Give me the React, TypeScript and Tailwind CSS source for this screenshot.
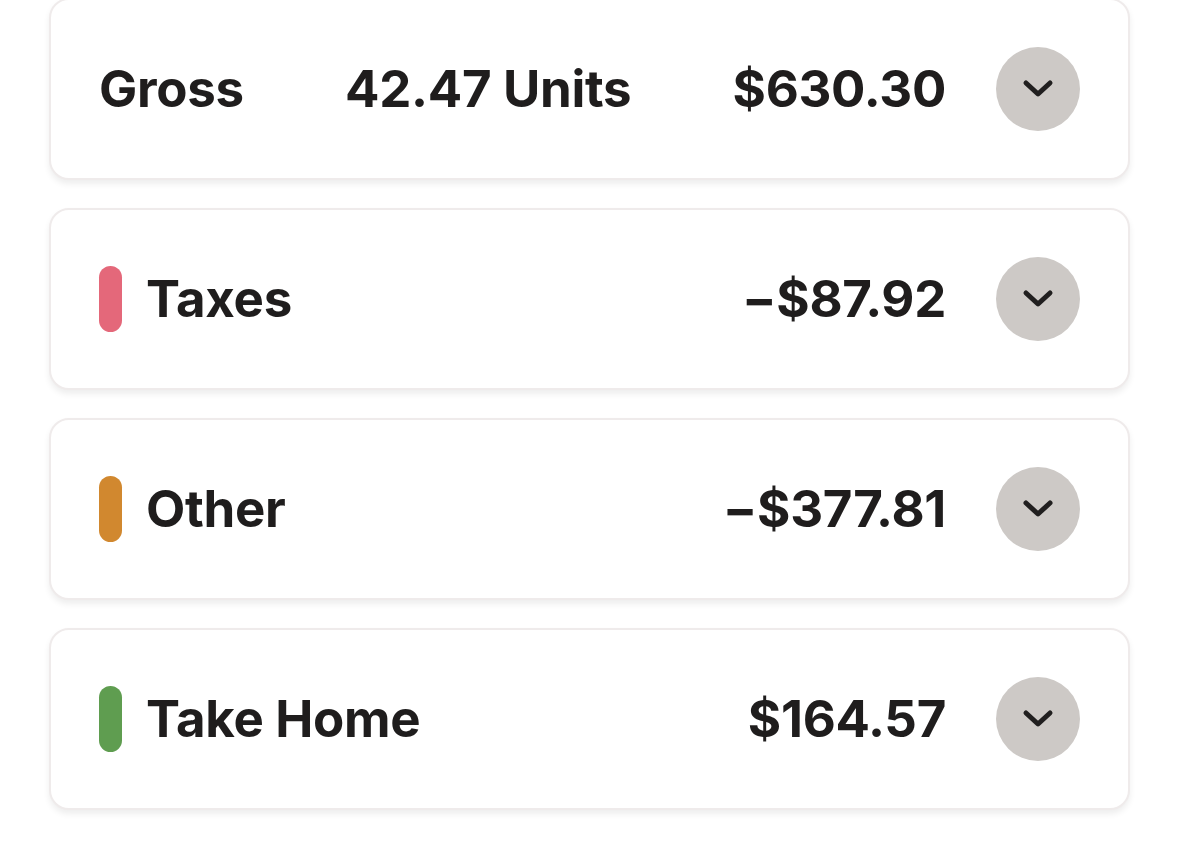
const rows = [
  { label: "Taxes", amount: "−$87.92", bar: "bg-[#e4687a]" },
  { label: "Other", amount: "−$377.81", bar: "bg-[#d1882f]" },
  { label: "Take Home", amount: "$164.57", bar: "bg-[#5f9d50]" },
];

function Chevron() {
  return (
    <button className="flex h-[84px] w-[84px] shrink-0 items-center justify-center rounded-full bg-[#cdc9c6]">
      <svg width="34" height="20" viewBox="0 0 34 20" fill="none">
        <path
          d="M5 4l12 11L29 4"
          stroke="#211f1f"
          strokeWidth="5"
          strokeLinecap="round"
          strokeLinejoin="round"
        />
      </svg>
    </button>
  );
}

function Card({ children }: { children: React.ReactNode }) {
  return (
    <div className="flex h-[182px] items-center rounded-[20px] border-2 border-[#efebeb] bg-white pl-[48px] pr-[48px] shadow-[0_4px_6px_rgba(0,0,0,0.07)]">
      {children}
    </div>
  );
}

export default function App() {
  return (
    <div
      className="min-h-screen bg-white px-[49px] text-[#1f1d1d]"
      style={{ fontFamily: "Inter, 'Liberation Sans', sans-serif" }}
    >
      <div className="-mt-[2px] flex flex-col gap-[28px]">
        {/* Gross summary */}
        <Card>
          <div className="flex flex-1 items-center justify-between text-[51px] font-bold tracking-[-0.3px]">
            <span>Gross</span>
            <span>42.47 Units</span>
            <span>$630.30</span>
          </div>
          <div className="ml-[50px]">
            <Chevron />
          </div>
        </Card>

        {rows.map((r) => (
          <Card key={r.label}>
            <div className="flex flex-1 items-center text-[51px] font-bold tracking-[-0.3px]">
              <span className={`h-[66px] w-[23px] rounded-full ${r.bar}`} />
              <span className="ml-[24px]">{r.label}</span>
              <span className="ml-auto">{r.amount}</span>
            </div>
            <div className="ml-[50px]">
              <Chevron />
            </div>
          </Card>
        ))}
      </div>
    </div>
  );
}
